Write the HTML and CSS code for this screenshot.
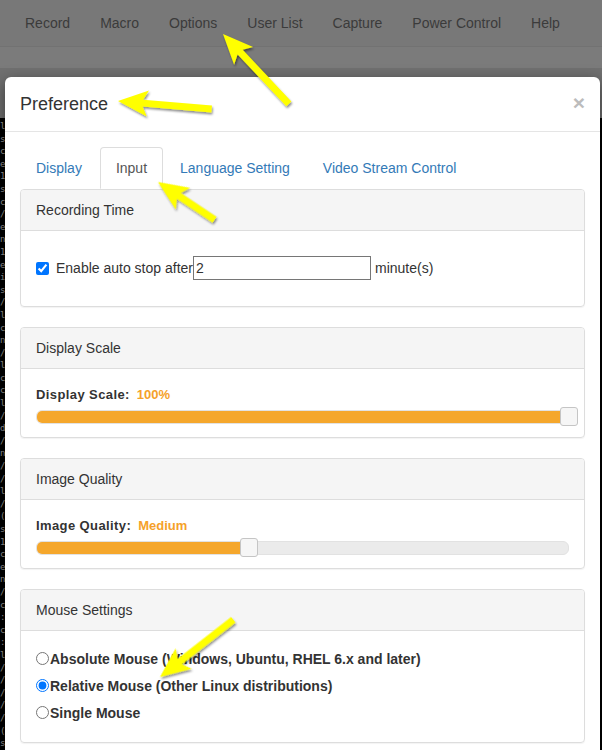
FILE: index.html
```html
<!DOCTYPE html>
<html lang="en">
<head>
    <meta charset="UTF-8">
    <meta name="viewport" content="width=device-width, initial-scale=1.0">
    <title>Preference</title>
    <link rel="stylesheet" href="styles.css">
</head>
<body>
    <div class="navbar">
        <a>Record</a>
        <a>Macro</a>
        <a>Options</a>
        <a>User List</a>
        <a>Capture</a>
        <a>Power Control</a>
        <a>Help</a>
    </div>
    <div class="toolbar"></div>
    <div class="view"></div>
    <pre class="console">l
s
c
e
1
s
c
/
e
n
1
e
i
s
/
l
c
n
/
l
c
c
l
/
d
/
n
/
/
l
/
(
s
1
c
e
n
/
c
:
c
:
l
/
/
/
/
/
(
s
</pre>

    <div class="modal">
        <div class="modal-header">
            <h4>Preference</h4>
            <span class="close">&times;</span>
        </div>
        <div class="modal-body">
            <ul class="tabs">
                <li><a>Display</a></li>
                <li class="active"><a>Input</a></li>
                <li><a>Language Setting</a></li>
                <li><a>Video Stream Control</a></li>
            </ul>

            <div class="panel">
                <div class="panel-heading">Recording Time</div>
                <div class="panel-body recording">
                    <input type="checkbox" checked>
                    <span>Enable auto stop after</span><input type="text" class="minutes" value="2"> minute(s)
                </div>
            </div>

            <div class="panel">
                <div class="panel-heading">Display Scale</div>
                <div class="panel-body">
                    <div class="slider-label">Display Scale:<span class="value">100%</span></div>
                    <div class="slider">
                        <div class="track"><div class="fill" style="width: 100%"></div></div>
                        <div class="handle" style="left: 100%"></div>
                    </div>
                </div>
            </div>

            <div class="panel">
                <div class="panel-heading">Image Quality</div>
                <div class="panel-body">
                    <div class="slider-label">Image Quality:<span class="value">Medium</span></div>
                    <div class="slider">
                        <div class="track"><div class="fill" style="width: 40%"></div></div>
                        <div class="handle" style="left: 40%"></div>
                    </div>
                </div>
            </div>

            <div class="panel">
                <div class="panel-heading">Mouse Settings</div>
                <div class="panel-body mouse">
                    <label><input type="radio" name="mouse">Absolute Mouse (Windows, Ubuntu, RHEL 6.x and later)</label>
                    <label><input type="radio" name="mouse" checked>Relative Mouse (Other Linux distributions)</label>
                    <label><input type="radio" name="mouse">Single Mouse</label>
                </div>
            </div>
        </div>
    </div>

    <svg class="arrows" width="602" height="750" viewBox="0 0 602 750">
        <defs>
            <filter id="shadow" x="-20%" y="-20%" width="140%" height="140%">
                <feDropShadow dx="1" dy="2" stdDeviation="1" flood-color="#000" flood-opacity="0.45"/>
            </filter>
        </defs>
        <g fill="#ffff00" filter="url(#shadow)">
            <polygon transform="translate(223 34) rotate(46.7)" points="0,0 30,-13 25,-3.5 96,-3.5 96,3.5 25,3.5 30,13"/>
            <polygon transform="translate(118 101) rotate(4.9)" points="0,0 30,-13 25,-3.5 94,-3.5 94,3.5 25,3.5 30,13"/>
            <polygon transform="translate(158 182) rotate(33.7)" points="0,0 30,-13 25,-3.5 68,-3.5 68,3.5 25,3.5 30,13"/>
            <polygon transform="translate(160 677) rotate(-38)" points="0,0 30,-13 25,-3.5 93,-3.5 93,3.5 25,3.5 30,13"/>
        </g>
    </svg>
</body>
</html>
```

FILE: styles.css
```css
html, body {
    height: 750px;
    overflow: hidden;
}
body {
    font-family: "Liberation Sans", Arial, sans-serif;
    font-size: 14px;
    color: #333;
    background: #000;
    margin: 0;
    position: relative;
}
.navbar {
    display: flex;
    height: 46px;
    padding-left: 10px;
    align-items: center;
    background: #787878;
    border-bottom: 1px solid #727272;
}
.navbar a {
    padding: 0 15px;
    color: #3b3b3b;
    line-height: 20px;
}
.toolbar {
    height: 21px;
    background: #7b7b7b;
}
.view {
    height: 50px;
    background: #707070;
}
.console {
    width: 5px;
    overflow: hidden;
    margin: 0;
    padding-top: 2px;
    font-family: "DejaVu Sans Mono", monospace;
    font-size: 9px;
    line-height: 12.6px;
    color: #9a9a9a;
}

/* modal */
.modal {
    position: absolute;
    top: 77px;
    left: 5px;
    width: 595px;
    background: #fff;
    border-radius: 6px;
    box-shadow: 0 5px 15px rgba(0, 0, 0, 0.5);
}
.modal-header {
    display: flex;
    justify-content: space-between;
    align-items: center;
    height: 54px;
    padding: 0 15px;
    border-bottom: 1px solid #e5e5e5;
}
.modal-header h4 {
    margin: 0;
    font-size: 18px;
    font-weight: normal;
    color: #333;
}
.close {
    font-size: 21px;
    font-weight: bold;
    color: #bcbcbc;
    line-height: 1;
    margin-top: -4px;
}
.modal-body {
    padding: 15px;
}

/* tabs */
.tabs {
    display: flex;
    list-style: none;
    margin: 0;
    padding: 0;
}
.tabs li {
    margin-right: 1px;
}
.tabs li:first-child {
    margin-right: 2px;
}
.tabs li.active {
    margin-right: 1px;
}
.tabs a {
    display: block;
    padding: 10px 15px;
    line-height: 20px;
    color: #337ab7;
    border: 1px solid transparent;
    border-radius: 4px 4px 0 0;
}
.tabs li.active a {
    color: #555;
    border-color: #ddd #ddd transparent;
}

/* panels */
.panel {
    border: 1px solid #ddd;
    border-radius: 4px;
    margin-bottom: 20px;
    box-shadow: 0 1px 1px rgba(0, 0, 0, 0.05);
}
.panel-heading {
    padding: 10px 15px;
    line-height: 20px;
    background: #f5f5f5;
    border-bottom: 1px solid #ddd;
    border-radius: 3px 3px 0 0;
}
.panel-body {
    padding: 16px 15px 11px;
}
.recording {
    display: flex;
    align-items: center;
    padding: 25px 15px 26px;
}
.recording input[type="checkbox"] {
    width: 13px;
    height: 13px;
    margin: 0 7px 0 0;
}
.minutes {
    width: 178px;
    height: 24px;
    box-sizing: border-box;
    margin: 0 4px 0 0;
    padding: 1px 2px;
    border: 1px solid #767676;
    font-family: inherit;
    font-size: 14px;
    color: #333;
}

/* sliders */
.slider-label {
    font-size: 13px;
    font-weight: bold;
    line-height: 20px;
    letter-spacing: 0.4px;
}
.slider-label .value {
    margin-left: 7px;
    letter-spacing: 0;
    color: #f5a12a;
}
.slider {
    position: relative;
    height: 19px;
    margin-top: 2px;
    display: flex;
    align-items: center;
}
.track {
    flex: 1;
    height: 12px;
    border-radius: 6px;
    background: #ebebeb;
    border: 1px solid #e2e2e2;
    overflow: hidden;
}
.fill {
    height: 100%;
    background: #f5a72c;
}
.handle {
    position: absolute;
    top: 0;
    width: 16px;
    height: 17px;
    margin-left: -9px;
    background: #f6f6f6;
    border: 1px solid #c5c5c5;
    border-radius: 3px;
}

/* mouse settings */
.mouse {
    display: flex;
    flex-direction: column;
    padding: 14px 15px 16px;
}
.mouse label {
    display: flex;
    align-items: center;
    height: 27px;
    font-size: 14px;
    font-weight: bold;
}
.mouse input {
    width: 13px;
    height: 13px;
    margin: 0 1px 0 0;
}

.arrows {
    position: absolute;
    top: 0;
    left: 0;
    pointer-events: none;
}
```
